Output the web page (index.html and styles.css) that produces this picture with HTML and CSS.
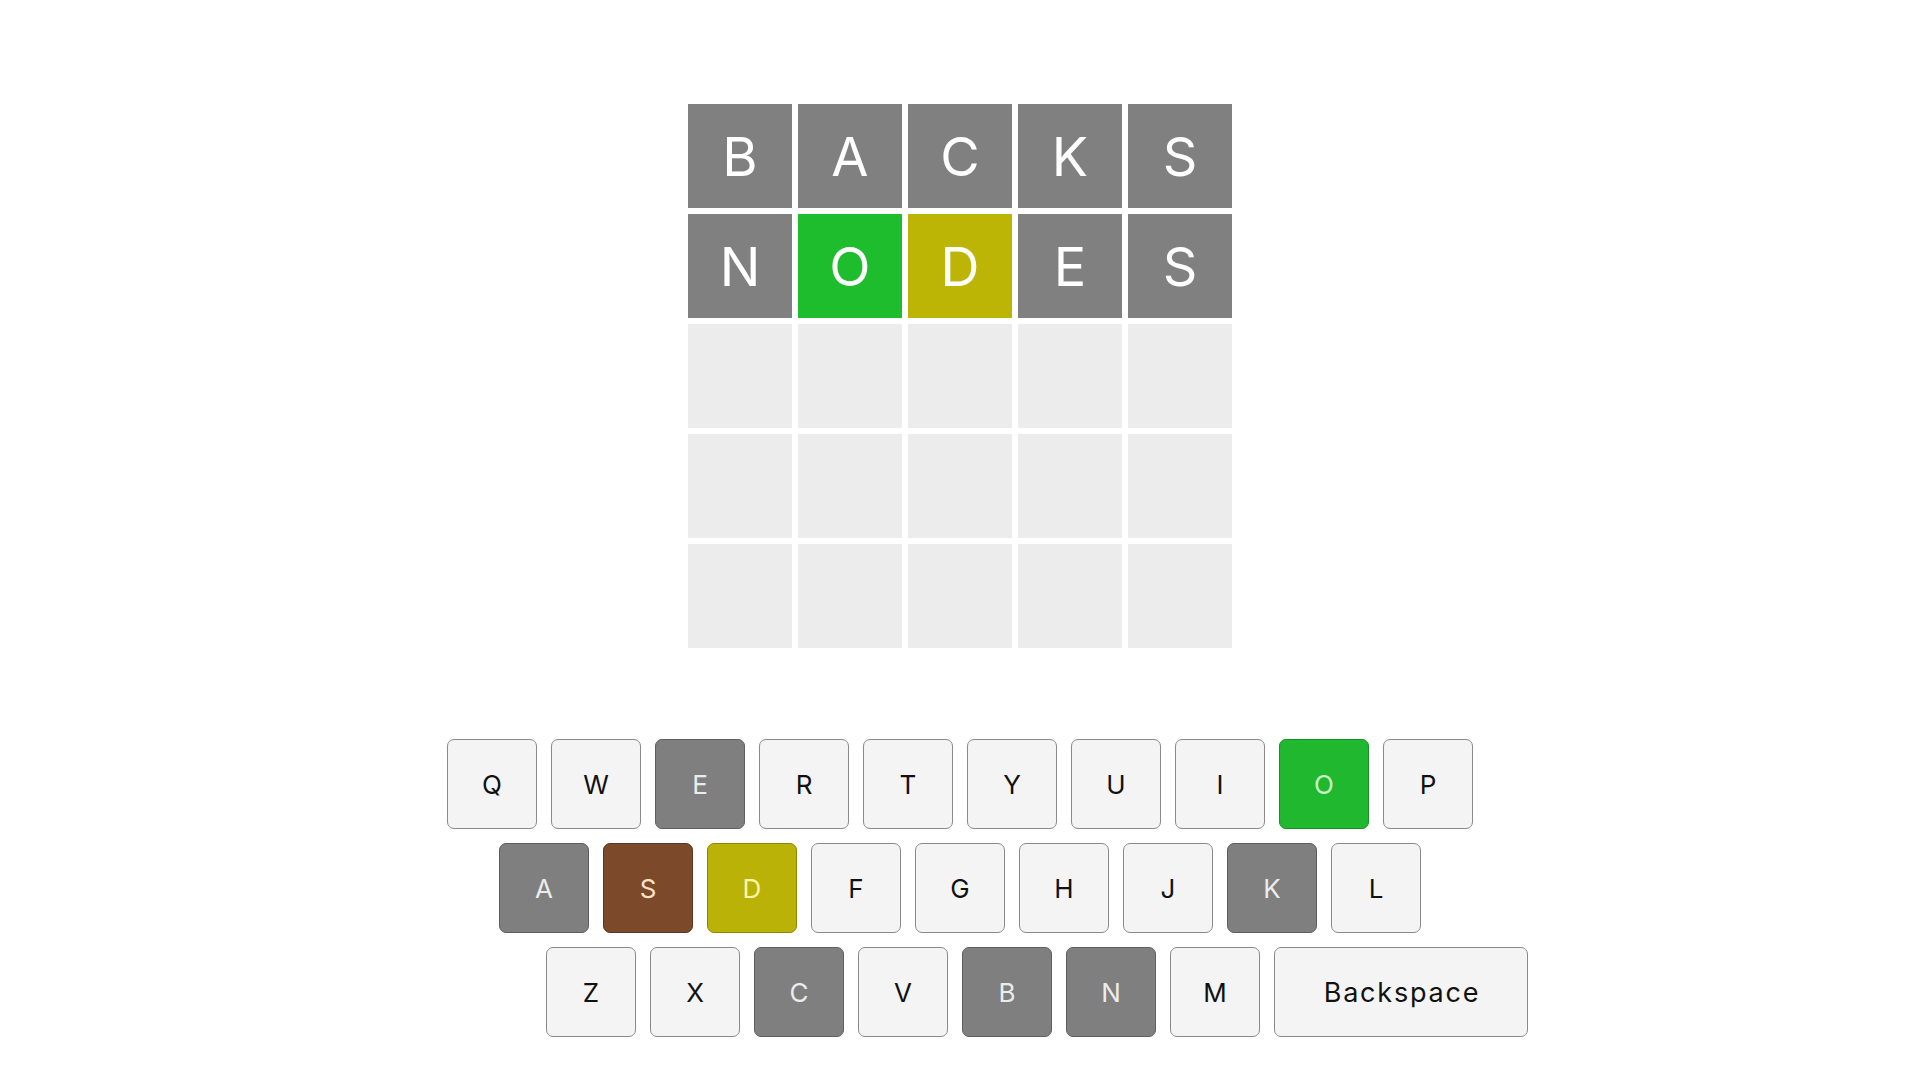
FILE: index.html
```html
<!DOCTYPE html>
<html lang="en">
<head>
  <meta charset="UTF-8" />
  <meta name="viewport" content="width=device-width, initial-scale=1" />
  <title>Wordle</title>
  <link rel="stylesheet" href="styles.css">
</head>
<body>
  <div class="game">
    <div class="board">
      <div class="tile miss">B</div>
      <div class="tile miss">A</div>
      <div class="tile miss">C</div>
      <div class="tile miss">K</div>
      <div class="tile miss">S</div>

      <div class="tile miss">N</div>
      <div class="tile hit">O</div>
      <div class="tile near">D</div>
      <div class="tile miss">E</div>
      <div class="tile miss">S</div>

      <div class="tile"></div>
      <div class="tile"></div>
      <div class="tile"></div>
      <div class="tile"></div>
      <div class="tile"></div>

      <div class="tile"></div>
      <div class="tile"></div>
      <div class="tile"></div>
      <div class="tile"></div>
      <div class="tile"></div>

      <div class="tile"></div>
      <div class="tile"></div>
      <div class="tile"></div>
      <div class="tile"></div>
      <div class="tile"></div>
    </div>

    <div class="keyboard">
      <div class="key-row">
        <button class="key">Q</button>
        <button class="key">W</button>
        <button class="key miss">E</button>
        <button class="key">R</button>
        <button class="key">T</button>
        <button class="key">Y</button>
        <button class="key">U</button>
        <button class="key">I</button>
        <button class="key hit">O</button>
        <button class="key">P</button>
      </div>
      <div class="key-row">
        <button class="key miss">A</button>
        <button class="key used">S</button>
        <button class="key near">D</button>
        <button class="key">F</button>
        <button class="key">G</button>
        <button class="key">H</button>
        <button class="key">J</button>
        <button class="key miss">K</button>
        <button class="key">L</button>
      </div>
      <div class="key-row last">
        <button class="key">Z</button>
        <button class="key">X</button>
        <button class="key miss">C</button>
        <button class="key">V</button>
        <button class="key miss">B</button>
        <button class="key miss">N</button>
        <button class="key">M</button>
        <button class="key wide">Backspace</button>
      </div>
    </div>
  </div>
</body>
</html>
```

FILE: styles.css
```css
* {
  box-sizing: border-box;
}
body {
  margin: 0;
  background: #ffffff;
  font-family: 'Inter', 'Open Sans', sans-serif;
  color: #111;
}
.game {
  display: flex;
  flex-direction: column;
  align-items: center;
  padding-top: 104px;
}
.board {
  display: grid;
  grid-template-columns: repeat(5, 104px);
  grid-auto-rows: 104px;
  gap: 6px;
}
.tile {
  background: #ececec;
  color: #ffffff;
  display: flex;
  align-items: center;
  justify-content: center;
  font-size: 54px;
  font-weight: 400;
  letter-spacing: 0;
}
.tile.miss {
  background: #808080;
}
.tile.hit {
  background: #1ebd2e;
}
.tile.near {
  background: #bdb505;
}
.keyboard {
  margin-top: 91px;
  width: 100%;
  display: flex;
  flex-direction: column;
  gap: 14px;
}
.key-row {
  display: flex;
  justify-content: center;
  gap: 14px;
}
.key-row.last {
  padding-left: 154px;
}
.key {
  width: 90px;
  height: 90px;
  border: 1.5px solid #8a8a8a;
  border-radius: 7px;
  background: #f4f4f4;
  color: #111;
  font-family: inherit;
  font-size: 26px;
  font-weight: 400;
  padding: 0;
  cursor: pointer;
}
.key.wide {
  width: 254px;
  font-size: 27px;
  letter-spacing: 1.8px;
  padding-left: 2px;
}
.key.miss {
  background: #7f7f7f;
  border-color: #5e5e5e;
  color: #ececec;
}
.key.hit {
  background: #1fb82f;
  border-color: #178f23;
  color: #c9f6c6;
}
.key.near {
  background: #bbb207;
  border-color: #8d8605;
  color: #fbf5a6;
}
.key.used {
  background: #7c4a2a;
  border-color: #5a3520;
  color: #fbe3c6;
}
```
